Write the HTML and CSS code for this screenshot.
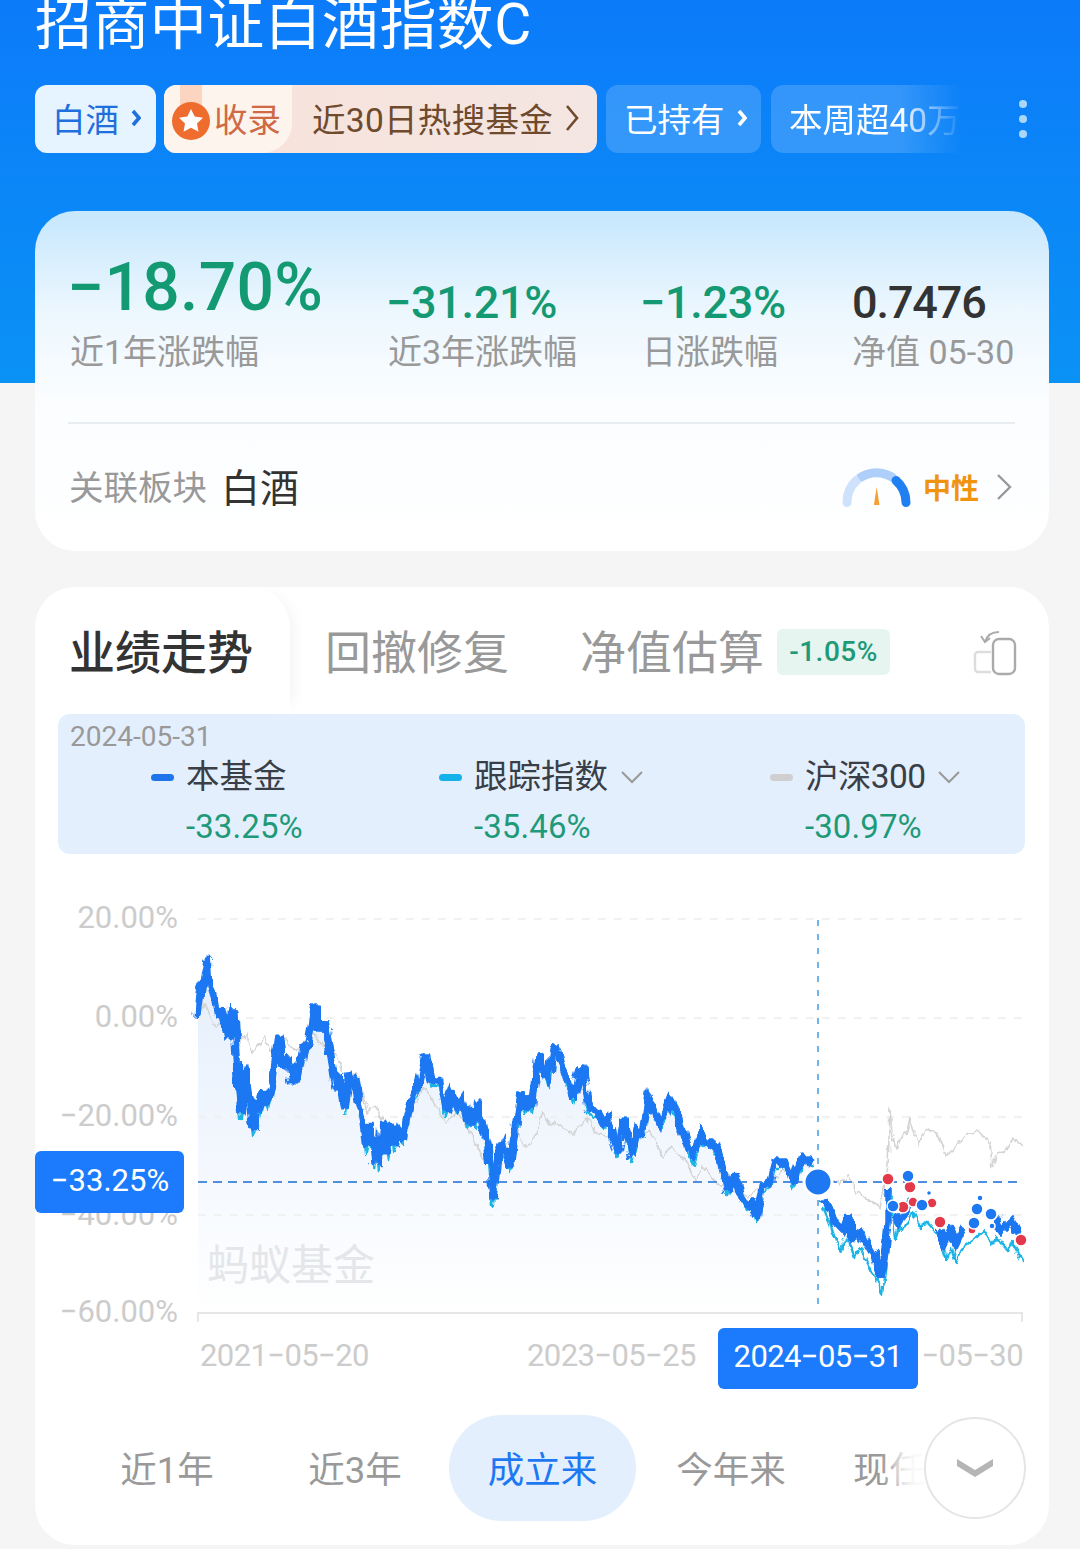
FILE: index.html
```html
<!DOCTYPE html>
<html lang="zh-CN">
<head>
<meta charset="utf-8">
<title>招商中证白酒指数C</title>
<link rel="stylesheet" href="styles.css">
</head>
<body>
<main class="page">
  <h1 class="title">招商中证白酒指数C</h1>
  <div class="pills">
    <a class="pill pill-white">白酒<svg class="chev" viewBox="0 0 10 20"><path d="M2 3l6 7-6 7"/></svg></a>
    <a class="pill pill-award">
      <span class="award-left">
        <svg class="medal" viewBox="0 0 40 68"><rect x="9" y="0" width="22" height="30" fill="#fbd5c0"/><circle cx="20" cy="36" r="19" fill="#ee6c2e"/><path d="M20 24l3.7 7.6 8.3 1.1-6 5.8 1.5 8.3-7.5-4-7.5 4 1.5-8.3-6-5.8 8.3-1.1z" fill="#fff"/></svg>
        <span>收录</span>
      </span>
      <span class="award-right">近30日热搜基金<svg class="chev chev-lg" viewBox="0 0 14 28"><path d="M2 2l10 12L2 26"/></svg></span>
    </a>
    <a class="pill pill-blue pill-held">已持有<svg class="chev" viewBox="0 0 10 20"><path d="M2 3l6 7-6 7"/></svg></a>
    <a class="pill pill-blue pill-fade">本周超40万人</a>
    <span class="more"><i></i><i></i><i></i></span>
  </div>

  <section class="card summary">
    <div class="stats">
      <div class="stat"><div class="val val-xl">−18.70%</div><div class="lab">近1年涨跌幅</div></div>
      <div class="stat"><div class="val">−31.21%</div><div class="lab">近3年涨跌幅</div></div>
      <div class="stat"><div class="val">−1.23%</div><div class="lab">日涨跌幅</div></div>
      <div class="stat"><div class="val val-dark">0.7476</div><div class="lab">净值 05-30</div></div>
    </div>
    <div class="divider"></div>
    <div class="sector">
      <div class="sector-name"><span class="sector-key">关联板块</span><span class="sector-val">白酒</span></div>
      <div class="mood">
        <svg class="gauge" viewBox="842 466 70 42">
          <path d="M847 502.5A29.5 29.5 0 0 1 857 480" fill="none" stroke="#cfe2fb" stroke-width="9" stroke-linecap="round"/>
          <path d="M859 478.5A29.5 29.5 0 0 1 894 478.5" fill="none" stroke="#aecffa" stroke-width="9"/>
          <path d="M896 480.5A29.5 29.5 0 0 1 906 502.5" fill="none" stroke="#2080f2" stroke-width="9" stroke-linecap="round"/>
          <path d="M876.7 487l2.8 18h-5.6z" fill="#f5a034"/>
        </svg>
        <span class="mood-text">中性</span>
        <svg class="mood-chev" viewBox="0 0 16 28"><path d="M2 2l12 12L2 26"/></svg>
      </div>
    </div>
  </section>

  <section class="card perf">
    <div class="tabs">
      <div class="tab tab-on">业绩走势</div>
      <div class="tab tab-first">回撤修复</div>
      <div class="tab tab-second">净值估算</div>
      <span class="badge">-1.05%</span>
      <svg class="rotate" viewBox="972 628 46 50">
        <rect x="993" y="640" width="22" height="35" rx="6" fill="none" stroke="#aaa" stroke-width="2.4"/>
        <path d="M991 653h-13a3 3 0 0 0-3 3v14a3 3 0 0 0 3 3h13" fill="none" stroke="#ddd" stroke-width="2.4"/>
        <path d="M999 633c-7 0-12 3-14 10M981 637l4 6 5-4" fill="none" stroke="#aaa" stroke-width="2"/>
      </svg>
    </div>

    <div class="legend">
      <div class="legend-date">2024-05-31</div>
      <div class="legend-items">
        <div class="item">
          <div class="item-head"><i class="dash dash-fund"></i>本基金</div>
          <div class="item-val">-33.25%</div>
        </div>
        <div class="item">
          <div class="item-head"><i class="dash dash-index"></i>跟踪指数<svg class="down" viewBox="0 0 24 14"><path d="M2 2l10 10L22 2"/></svg></div>
          <div class="item-val">-35.46%</div>
        </div>
        <div class="item">
          <div class="item-head item-head-tight"><i class="dash dash-hs"></i>沪深300<svg class="down" viewBox="0 0 24 14"><path d="M2 2l10 10L22 2"/></svg></div>
          <div class="item-val">-30.97%</div>
        </div>
      </div>
    </div>

    <svg class="chart" viewBox="35 854 1014 546">
      <defs>
        <linearGradient id="area" x1="0" y1="0" x2="0" y2="1">
          <stop offset="0" stop-color="#e4eefc"/>
          <stop offset="1" stop-color="#ffffff"/>
        </linearGradient>
        <filter id="jag" filterUnits="userSpaceOnUse" x="190" y="940" width="850" height="370">
          <feTurbulence type="fractalNoise" baseFrequency="0.16 0.05" numOctaves="2" seed="7"/>
          <feDisplacementMap in="SourceGraphic" scale="11" xChannelSelector="R" yChannelSelector="G"/>
        </filter>
        <filter id="jag-soft" filterUnits="userSpaceOnUse" x="190" y="940" width="850" height="370">
          <feTurbulence type="fractalNoise" baseFrequency="0.2 0.08" numOctaves="2" seed="3"/>
          <feDisplacementMap in="SourceGraphic" scale="7" xChannelSelector="R" yChannelSelector="G"/>
        </filter>
      </defs>

      <g class="axis-y">
        <text x="178" y="928">20.00%</text>
        <text x="178" y="1027">0.00%</text>
        <text x="178" y="1126">−20.00%</text>
        <text x="178" y="1225">−40.00%</text>
        <text x="178" y="1322">−60.00%</text>
      </g>

      <polygon fill="url(#area)" points="198,1017 201,987 204,982 208,958 210,987 214,1000 217,1017 221,1007 225,1023 228,1040 232,1010 235,1013 238,1077 241,1113 246,1067 249,1093 253,1130 256,1100 259,1113 263,1090 268,1103 272,1087 275,1063 279,1035 283,1067 287,1057 291,1082 294,1063 297,1083 304,1047 309,1043 316,1005 320,1033 324,1022 330,1050 336,1088 339,1072 345,1110 350,1073 355,1082 358,1100 362,1115 366,1148 370,1123 374,1163 377,1138 380,1165 383,1122 388,1155 392,1123 394,1147 398,1130 403,1140 408,1110 413,1097 420,1082 426,1052 431,1080 440,1082 445,1110 451,1093 457,1108 462,1100 467,1122 472,1110 475,1123 478,1100 483,1127 488,1147 493,1200 498,1157 503,1145 510,1167 520,1093 525,1110 528,1097 532,1108 539,1055 545,1070 549,1083 553,1050 557,1048 562,1063 573,1098 582,1068 588,1107 597,1112 603,1123 607,1117 618,1153 624,1117 632,1157 638,1130 643,1133 648,1100 653,1107 660,1125 670,1100 677,1113 693,1160 700,1133 705,1142 712,1142 718,1152 723,1170 728,1190 735,1172 742,1197 747,1205 752,1203 756,1218 762,1187 770,1182 775,1162 787,1162 793,1183 802,1157 813,1162 818,1182 818,1313 198,1313"/>

      <g class="grid">
        <line x1="198" y1="919" x2="1022" y2="919"/>
        <line x1="198" y1="1018" x2="1022" y2="1018"/>
        <line x1="198" y1="1117" x2="1022" y2="1117"/>
        <line x1="198" y1="1215" x2="1022" y2="1215"/>
      </g>
      <path class="base" d="M198 1322v-9H1022v9"/>

      <text class="watermark" x="207" y="1280">蚂蚁基金</text>

      <g filter="url(#jag-soft)">
        <polyline class="l-hs" points="198,1017 205,1003 215,1027 225,1020 235,1040 240,1047 246,1033 253,1053 259,1045 265,1035 270,1052 277,1046 285,1038 297,1052 305,1040 313,1033 322,1045 337,1055 343,1073 358,1075 367,1113 375,1105 383,1120 403,1130 423,1087 437,1107 447,1123 457,1112 470,1133 483,1157 490,1167 517,1130 525,1147 533,1140 543,1113 550,1125 557,1123 565,1130 573,1135 588,1117 595,1133 610,1137 630,1140 650,1130 663,1157 670,1147 687,1162 695,1180 703,1167 723,1188 750,1197 770,1180 803,1160 840,1185 848,1175 857,1192 880,1208 888,1167 890,1108 892,1133 897,1150 903,1135 907,1133 910,1118 918,1145 923,1135 928,1130 937,1133 945,1155 955,1148 967,1133 980,1132 990,1142 992,1168 997,1153 1007,1150 1012,1138 1022,1147"/>
        <polyline class="l-index" points="238,1082 241,1118 246,1072 249,1098 253,1135 256,1105 259,1118 263,1095 268,1108 272,1092"/>
        <polyline class="l-index" points="345,1115 350,1078 355,1087 358,1105 362,1120 366,1153 370,1128 374,1168 377,1143 380,1170 383,1127 388,1160 392,1128 394,1152 398,1135 403,1145 408,1115 413,1102 420,1087 426,1057 431,1085 440,1087 445,1115 451,1098 457,1113 462,1105 467,1127 472,1115 475,1128 478,1105 483,1132 488,1152 493,1205 498,1162 503,1150 510,1172 520,1098 525,1115 528,1102 532,1113 539,1060 545,1075 549,1088 553,1055 557,1053 562,1068 573,1103 582,1073 588,1112 597,1117 603,1128 607,1122 618,1158 624,1122 632,1162 638,1135 643,1138 648,1105 653,1112 660,1130 670,1105 677,1118 693,1165 700,1138 705,1147 712,1147 718,1157 723,1175 728,1195 735,1177 742,1202 747,1210 752,1208 756,1223 762,1192 770,1187 775,1167 787,1167 793,1188 802,1162 813,1167"/>
        <polyline class="l-index" points="823,1207 830,1223 840,1252 847,1237 855,1258 860,1247 870,1268 882,1293 887,1257 889,1190 891,1200 895,1240 900,1223 903,1230 913,1212 920,1227 927,1222 940,1237 947,1260 952,1248 957,1263 963,1247 973,1240 983,1230 992,1245 997,1237 1007,1250 1012,1242 1023,1262"/>
      </g>

      <line class="cross-v" x1="818" y1="920" x2="818" y2="1310"/>
      <line class="cross-h" x1="198" y1="1182" x2="1022" y2="1182"/>

      <g filter="url(#jag)">
        <polyline class="l-fund" points="198,1017 201,987 204,982 208,958 210,987 214,1000 217,1017 221,1007 225,1023 228,1040 232,1010 235,1013 238,1077 241,1113 246,1067 249,1093 253,1130 256,1100 259,1113 263,1090 268,1103 272,1087 275,1063 279,1035 283,1067 287,1057 291,1082 294,1063 297,1083 304,1047 309,1043 316,1005 320,1033 324,1022 330,1050 336,1088 339,1072 345,1110 350,1073 355,1082 358,1100 362,1115 366,1148 370,1123 374,1163 377,1138 380,1165 383,1122 388,1155 392,1123 394,1147 398,1130 403,1140 408,1110 413,1097 420,1082 426,1052 431,1080 440,1082 445,1110 451,1093 457,1108 462,1100 467,1122 472,1110 475,1123 478,1100 483,1127 488,1147 493,1200 498,1157 503,1145 510,1167 520,1093 525,1110 528,1097 532,1108 539,1055 545,1070 549,1083 553,1050 557,1048 562,1063 573,1098 582,1068 588,1107 597,1112 603,1123 607,1117 618,1153 624,1117 632,1157 638,1130 643,1133 648,1100 653,1107 660,1125 670,1100 677,1113 693,1160 700,1133 705,1142 712,1142 718,1152 723,1170 728,1190 735,1172 742,1197 747,1205 752,1203 756,1218 762,1187 770,1182 775,1162 787,1162 793,1183 802,1157 813,1162"/>
        <polyline class="l-fund" points="823,1200 835,1222 843,1230 848,1215 852,1238 860,1232 875,1257 882,1277 888,1223 888,1190"/>
        <polyline class="l-fund" points="895,1215 900,1222 905,1212 912,1200"/>
        <polyline class="l-fund" points="940,1230 945,1243 950,1232 956,1243 963,1228"/>
        <polyline class="l-fund" points="997,1218 1002,1230 1012,1220 1021,1240"/>
      </g>

      <g class="dots-red">
        <circle cx="888" cy="1179" r="6"/><circle cx="910" cy="1187" r="6"/><circle cx="903" cy="1207" r="6"/>
        <circle cx="913" cy="1202" r="5"/><circle cx="932" cy="1203" r="5"/><circle cx="940" cy="1222" r="6"/>
        <circle cx="972" cy="1230" r="4"/><circle cx="1021" cy="1240" r="6"/>
      </g>
      <g class="dots-blue">
        <circle cx="908" cy="1176" r="6"/><circle cx="893" cy="1206" r="6"/><circle cx="922" cy="1205" r="6"/>
        <circle cx="977" cy="1209" r="6"/><circle cx="974" cy="1223" r="6"/><circle cx="991" cy="1214" r="6"/>
        <circle cx="929" cy="1193" r="2.5"/><circle cx="992" cy="1226" r="3"/><circle cx="980" cy="1198" r="3"/>
      </g>
      <circle class="focus" cx="818" cy="1182" r="14"/>

      <rect class="tip" x="35" y="1151" width="149" height="62" rx="6"/>
      <text class="tip-text" x="110" y="1191">−33.25%</text>

      <g class="axis-x">
        <text x="200" y="1366">2021−05−20</text>
        <text x="527" y="1366">2023−05−25</text>
        <text x="1023" y="1366" class="end">−05−30</text>
      </g>
      <rect class="tip" x="718" y="1328" width="200" height="61" rx="6"/>
      <text class="tip-text tip-date" x="818" y="1367">2024−05−31</text>
    </svg>

    <div class="ranges">
      <div class="range">近1年</div>
      <div class="range">近3年</div>
      <div class="range range-on">成立来</div>
      <div class="range">今年来</div>
      <div class="range range-last">现任经理</div>
      <div class="expand">
        <svg class="expand-chev" viewBox="0 0 40 24"><path d="M2 3l18 11L38 3v7L20 21 2 10z"/></svg>
      </div>
    </div>
  </section>
</main>
</body>
</html>
```

FILE: styles.css
```css
* { box-sizing: border-box; }
html, body { margin: 0; padding: 0; }
body {
  width: 1080px;
  height: 1549px;
  overflow: hidden;
  background: #f5f5f5;
  font-family: Roboto, "Noto Sans CJK SC", sans-serif;
}
.page {
  width: 1080px;
  height: 1549px;
  padding: 0 31px 0 35px;
  overflow: hidden;
  background: linear-gradient(180deg, #0c7bfa 0, #0a92f5 383px, #f5f5f5 383px);
}

/* header */
.title {
  margin: -4px 0 0;
  height: 57px;
  font-size: 57px;
  line-height: 57px;
  font-weight: 400;
  letter-spacing: .4px;
  color: #fff;
  white-space: nowrap;
}
.pills {
  display: flex;
  align-items: center;
  gap: 8px;
  height: 68px;
  margin-top: 32px;
}
.pill {
  display: flex;
  align-items: center;
  height: 68px;
  padding-bottom: 4px;
  border-radius: 12px;
  font-size: 33.5px;
  white-space: nowrap;
  overflow: hidden;
}
.chev { width: 10px; height: 20px; margin: 2px 0 0 12px; flex: none; }
.chev path { fill: none; stroke: currentColor; stroke-width: 3.6; }
.chev-lg { width: 14px; height: 28px; margin: 2px 0 0 12px; }
.chev-lg path { stroke-width: 2.6; }
.pill-white { width: 121px; padding-left: 17px; background: #e6f4ff; color: #1f6fdc; }
.pill-award { width: 433px; padding-bottom: 0; background: linear-gradient(90deg, #f8e2da, #f4e6e2); }
.award-left {
  display: flex;
  align-items: flex-start;
  width: 128px;
  height: 68px;
  flex: none;
  background: #fdf4ee;
  border-radius: 12px 0 30px 0;
  color: #cf6a45;
}
.award-left span { line-height: 72px; margin-left: 3px; }
.medal { width: 40px; height: 68px; margin-left: 7px; flex: none; }
.award-right { display: flex; align-items: center; padding: 0 0 4px 20px; color: #6f4a2c; font-size: 33.5px; letter-spacing: .3px; }
.pill-blue { padding-left: 18px; background: rgba(255, 255, 255, .17); color: #fff; }
.pill-held { width: 155px; margin-left: 1px; }
.pill-fade {
  width: 214px;
  margin-left: 2px;
  -webkit-mask-image: linear-gradient(90deg, #000 60%, transparent 90%);
  mask-image: linear-gradient(90deg, #000 60%, transparent 90%);
}
.more { display: flex; flex-direction: column; gap: 7px; margin-left: auto; margin-right: 22px; }
.more i { display: block; width: 8px; height: 8px; border-radius: 50%; background: #a9d6fb; }

/* cards */
.card { width: 1014px; border-radius: 40px; background: #fff; }
.summary {
  height: 340px;
  margin-top: 58px;
  padding: 47px 35px 0;
  background: linear-gradient(180deg, #c6e7fd 0, #ecf7fe 100px, #fbfdff 190px, #fff 100%);
}
.stats { display: grid; grid-template-columns: 318px 254px 210px auto; align-items: end; height: 114px; }
.val { margin: 0 0 4px -2px; font-size: 45px; line-height: 50px; font-weight: 500; color: #149a73; letter-spacing: -.3px; }
.val-xl { margin: 0 0 14px -3px; font-size: 66px; line-height: 60px; letter-spacing: .3px; }
.val-dark { margin-left: 0; color: #333; letter-spacing: -1.1px; }
.lab { font-size: 34px; line-height: 40px; color: #999; white-space: nowrap; }
.divider { width: 947px; height: 2px; margin: 50px 0 0 -2px; background: #e8edf1; }
.sector { display: flex; align-items: center; justify-content: space-between; height: 128px; padding-bottom: 6px; }
.sector-name { display: flex; align-items: center; }
.sector-key { font-size: 34.5px; margin-left: -1px; color: #999; }
.sector-val { font-size: 39px; color: #333; margin-left: 14px; }
.mood { display: flex; align-items: center; margin: 4px 2px 0 0; }
.gauge { width: 70px; height: 42px; }
.mood-text { margin-left: 11px; font-size: 28px; font-weight: 700; color: #f0930f; }
.mood-chev { width: 16px; height: 28px; margin-left: 17px; }
.mood-chev path { fill: none; stroke: #999; stroke-width: 2.4; }

/* performance */
.perf { height: 958px; margin-top: 36px; position: relative; }
.tabs { display: flex; align-items: center; height: 127px; }
.tab { font-size: 46px; line-height: 60px; padding-top: 4px; color: #999; white-space: nowrap; }
.tab-on {
  display: flex;
  align-items: center;
  width: 255px;
  height: 127px;
  padding-left: 34px;
  color: #333;
  font-weight: 500;
  border-radius: 40px 40px 0 0;
  box-shadow: 12px 0 16px -10px rgba(0, 0, 0, .06);
}
.tab-first { margin-left: 35px; }
.tab-second { margin-left: 71px; }
.badge {
  margin: 2px 0 0 13px;
  width: 113px;
  height: 46px;
  border-radius: 6px;
  background: #e6f5f0;
  color: #1f9a78;
  font-size: 28px;
  font-weight: 500;
  line-height: 46px;
  letter-spacing: .5px;
  text-align: center;
}
.rotate { width: 46px; height: 50px; margin: 2px 31px 0 auto; }

.legend {
  width: 967px;
  height: 140px;
  margin-left: 23px;
  padding: 8px 0 0 12px;
  border-radius: 12px;
  background: #e4effd;
}
.legend-date { font-size: 28px; line-height: 30px; color: #999; }
.legend-items { display: grid; grid-template-columns: 288px 331px auto; margin: 5px 0 0 81px; }
.item-head { display: flex; align-items: center; font-size: 33.5px; line-height: 40px; color: #3a3f47; white-space: nowrap; }
.item-head-tight { letter-spacing: -.6px; }
.dash { width: 23px; height: 7px; margin-right: 12px; border-radius: 4px; flex: none; }
.dash-fund { background: #1f74ea; }
.dash-index { background: #15b2ea; }
.dash-hs { background: #cfcfcf; }
.down { width: 24px; height: 14px; margin-left: 12px; }
.down path { fill: none; stroke: #999; stroke-width: 2; }
.item-val { margin: 10px 0 0 35px; font-size: 33px; line-height: 40px; color: #1f9a78; letter-spacing: .1px; }

.chart { display: block; width: 1014px; height: 546px; }
.axis-y text { font-size: 31px; fill: #ccc; text-anchor: end; }
.grid line { stroke: #eee; stroke-width: 1.5; stroke-dasharray: 8 8; }
.base { fill: none; stroke: #e6e6e6; stroke-width: 2; }
.watermark { font-size: 42px; fill: #e4e6e9; }
.l-hs { fill: none; stroke: #d4d4d4; stroke-width: 1.6; stroke-linejoin: round; }
.l-index { fill: none; stroke: #1bb4e4; stroke-width: 2.4; stroke-linejoin: round; }
.l-fund { fill: none; stroke: #1d78f2; stroke-width: 7.5; stroke-linejoin: miter; stroke-miterlimit: 3; }
.cross-v { stroke: #6fb3e8; stroke-width: 2; stroke-dasharray: 6 8; }
.cross-h { stroke: #4f8fde; stroke-width: 2; stroke-dasharray: 9 6; }
.dots-red circle { fill: #e23a4a; stroke: #fff; stroke-width: 1.5; }
.dots-blue circle { fill: #1d78f2; stroke: #fff; stroke-width: 1.5; }
.focus { fill: #1d78f2; stroke: #fff; stroke-width: 3; }
.tip { fill: #1b7bfc; }
.tip-text { font-size: 31px; fill: #fff; text-anchor: middle; }
.tip-date { letter-spacing: -.6px; }
.axis-x text { font-size: 31px; fill: #ccc; letter-spacing: -.6px; }
.axis-x .end { text-anchor: end; }

.ranges { display: flex; align-items: center; height: 106px; margin: 15px 0 0 38px; }
.range { flex: none; width: 188px; height: 106px; font-size: 36.5px; line-height: 112px; color: #999; text-align: center; white-space: nowrap; }
.range-on { width: 187px; margin-right: 1px; border-radius: 53px; background: #e4effd; color: #1d78f2; }
.range-last { width: 200px; margin-left: 1px; }
.expand {
  position: absolute;
  left: 889px;
  top: 830px;
  width: 102px;
  height: 102px;
  border-radius: 50%;
  border: 2px solid #e5e5e5;
  background: #fff;
  display: flex;
  align-items: center;
  justify-content: center;
  box-shadow: -24px 0 18px 6px rgba(255, 255, 255, .95);
}
.expand-chev { width: 40px; height: 24px; }
.expand-chev path { fill: #b5b5b5; }
```
